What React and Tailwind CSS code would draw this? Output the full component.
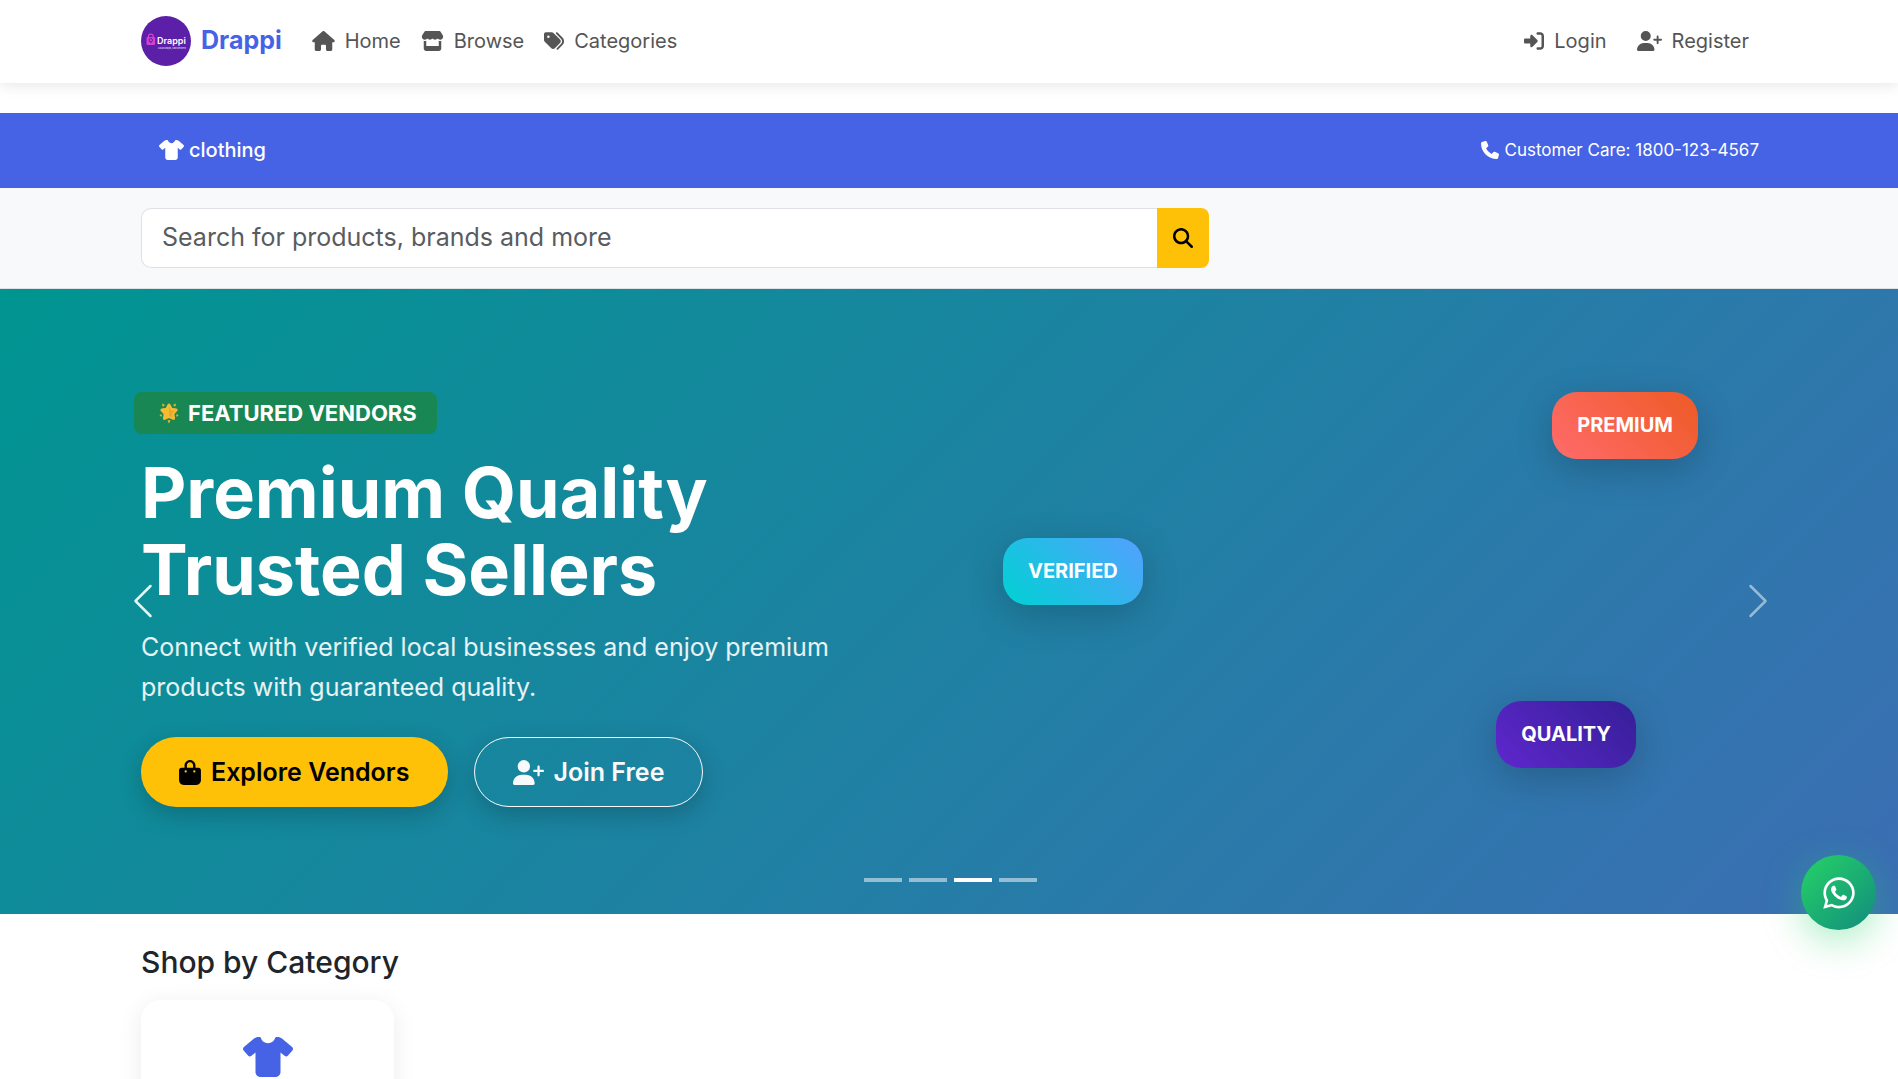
import React from "react";
import {
  FaHouse,
  FaStore,
  FaTags,
  FaRightToBracket,
  FaUserPlus,
  FaShirt,
  FaPhone,
  FaMagnifyingGlass,
  FaBagShopping,
  FaWhatsapp,
} from "react-icons/fa6";

const container = "mx-auto w-full max-w-[1650px] pl-[17px] pr-[15px]";

function Logo() {
  return (
    <svg viewBox="0 0 50 50" className="size-[50px]" role="img" aria-label="Drappi logo">
      <circle cx="25" cy="25" r="25" fill="#5b1fa8" />
      <path d="M7.400 21.500v-.9a2.400 2.400 0 0 1 4.800 0v.9" fill="none" stroke="#d63fd0" strokeWidth="1.200" />
      <rect x="5.500" y="21" width="8.600" height="8" rx="1.200" fill="#d63fd0" />
      <circle cx="9.800" cy="24.200" r="1.700" fill="none" stroke="#5b1fa8" strokeWidth="1" />
      <path d="M8.700 25.600l1.100 1.800 1.100-1.800z" fill="#5b1fa8" />
      <text x="16" y="27.500" fontFamily="Inter, sans-serif" fontWeight="600" fontSize="9" fill="#fff">
        Drappi
      </text>
      <text x="17" y="32.500" fontFamily="Inter, sans-serif" fontSize="2.200" fill="#d8c4f0">
        Local Shops, Fast Delivery
      </text>
    </svg>
  );
}

function GlowingStar() {
  return (
    <svg viewBox="0 0 24 24" className="size-[22px]" aria-hidden="true">
      <path
        d="M12 3.200l2.500 4.600 5.300.9-3.600 3.900.8 5.300-5-2.200-5 2.200.8-5.300-3.600-3.900 5.300-.9z"
        fill="#f5bb33"
        stroke="#f5bb33"
        strokeWidth="3.200"
        strokeLinejoin="round"
      />
      <path d="M12 5l1.900 4 4.300.7-3 3 .6 4.300-3.800-1.900z" fill="#eaa92c" />
      <g fill="#f5bb33">
        <path d="M4.500 1.600l3.200 1.700-2.600 1.900zM19.500 1.600l-3.200 1.700 2.600 1.900z" />
        <path d="M1.500 14.200l2.600-.8-.4 3zM22.500 14.200l-2.600-.8.4 3z" />
        <path d="M12 23.400l-1.600-3.400h3.200z" />
      </g>
    </svg>
  );
}

function NavItem({ icon: Icon, iconWidth, children }) {
  return (
    <a href="#" className="flex items-center gap-2.5 px-2.5 py-2 text-[#555]">
      <Icon className={`h-5 ${iconWidth}`} />
      {children}
    </a>
  );
}

function Chevron({ d }) {
  return (
    <svg viewBox="0 0 16 16" className="size-10" fill="currentColor" aria-hidden="true">
      <path fillRule="evenodd" d={d} />
    </svg>
  );
}

const chip =
  "absolute rounded-[25px] px-[25px] py-[18px] text-xl leading-[31px] font-bold text-white shadow-[0_10px_38px_rgba(0,0,0,0.2)]";

export default function App() {
  return (
    <div className="h-screen overflow-hidden bg-white font-['Inter',sans-serif] text-xl text-[#212529]">
      <header className="relative bg-white shadow-[0_2px_14px_rgba(0,0,0,0.1)]">
        <nav className={`${container} flex h-[83px] items-center pb-0.5`}>
          <a href="#" className="mr-5 flex items-center gap-2.5 text-[25px] font-bold text-[#4663e6]">
            <Logo />
            Drappi
          </a>
          <NavItem icon={FaHouse} iconWidth="w-[23px]">Home</NavItem>
          <NavItem icon={FaStore} iconWidth="w-[23px]">Browse</NavItem>
          <NavItem icon={FaTags} iconWidth="w-5">Categories</NavItem>
          <div className="ml-auto flex gap-2.5">
            <NavItem icon={FaRightToBracket} iconWidth="w-5">Login</NavItem>
            <NavItem icon={FaUserPlus} iconWidth="w-[25px]">Register</NavItem>
          </div>
        </nav>
      </header>

      <div className="mt-[30px] bg-[#4663e6] text-white">
        <div className={`${container} flex h-[75px] items-center justify-between`}>
          <a href="#" className="ml-[18px] flex items-center gap-[5px] pb-0.5 font-medium">
            <FaShirt className="h-5 w-[25px]" />
            clothing
          </a>
          <span className="flex items-center gap-1.5 text-[17px]">
            <FaPhone className="size-[18px]" />
            Customer Care: 1800-123-4567
          </span>
        </div>
      </div>

      <section className="border-b border-[#dee2e6] bg-[#f8f9fb] py-5">
        <div className={container}>
          <form className="flex w-[66%] max-w-[1069px]" onSubmit={(e) => e.preventDefault()}>
            <input
              type="text"
              aria-label="Search for products"
              placeholder="Search for products, brands and more"
              className="h-[60px] min-w-0 flex-1 rounded-l-[10px] border border-r-0 border-[#dee2e6] bg-white px-5 pb-0.5 text-[25px] placeholder:text-[#595c5f]"
            />
            <button
              type="submit"
              aria-label="Search"
              className="flex w-[52px] items-center justify-center rounded-r-[8px] bg-[#ffc107] text-black"
            >
              <FaMagnifyingGlass className="size-5" />
            </button>
          </form>
        </div>
      </section>

      <section className="relative h-[625px] overflow-hidden bg-linear-135/srgb from-[#009591] to-[#3c6eb4]">
        <div className={`${container} relative flex h-full flex-col items-start pt-[103px] text-white`}>
          <span className="-ml-[7px] flex h-[42px] items-center gap-2 rounded-lg bg-[#198754] pr-5 pl-6 text-[22px] font-bold">
            <GlowingStar />
            FEATURED VENDORS
          </span>
          <h1 className="mt-5 text-[70px] leading-[77px] font-bold">
            Premium Quality
            <br />
            Trusted Sellers
          </h1>
          <p className="mt-[19px] max-w-[740px] text-[25px] leading-10 text-white/90">
            Connect with verified local businesses and enjoy premium products with guaranteed quality.
          </p>
          <div className="mt-[30px] flex gap-[26px]">
            <button
              type="button"
              className="flex h-[70px] items-center gap-2.5 rounded-full bg-[#ffc107] px-[38px] text-[25px] font-semibold text-black shadow-[0_8px_25px_rgba(0,0,0,0.2)]"
            >
              <FaBagShopping className="h-[25px] w-[22px]" />
              Explore Vendors
            </button>
            <button
              type="button"
              className="flex h-[70px] items-center gap-2.5 rounded-full border border-[#f8f9fa] px-[38px] text-[25px] font-semibold text-[#f8f9fa] shadow-[0_8px_25px_rgba(0,0,0,0.2)]"
            >
              <FaUserPlus className="h-[25px] w-[31px]" />
              Join Free
            </button>
          </div>
          <span className={`${chip} top-[103px] right-[76px] bg-linear-45/srgb from-[#ff6b6b] to-[#ee5a24]`}>PREMIUM</span>
          <span className={`${chip} top-[249px] left-[879px] bg-linear-45/srgb from-[#00d2d3] to-[#54a0ff]`}>VERIFIED</span>
          <span className={`${chip} top-[412px] right-[138px] bg-linear-45/srgb from-[#5f27cd] to-[#341f97]`}>QUALITY</span>
        </div>

        <button
          type="button"
          aria-label="Previous"
          className="absolute inset-y-0 left-0 flex w-[15%] items-center justify-center pb-0.5 pl-0.5 text-white/90"
        >
          <Chevron d="M11.354 1.646a.5.5 0 0 1 0 .708L5.707 8l5.647 5.646a.5.5 0 0 1-.708.708l-6-6a.5.5 0 0 1 0-.708l6-6a.5.5 0 0 1 .708 0z" />
        </button>
        <button
          type="button"
          aria-label="Next"
          className="absolute inset-y-0 right-0 flex w-[15%] items-center justify-center pb-0.5 pl-1 text-white/50"
        >
          <Chevron d="M4.646 1.646a.5.5 0 0 1 .708 0l6 6a.5.5 0 0 1 0 .708l-6 6a.5.5 0 0 1-.708-.708L10.293 8 4.646 2.354a.5.5 0 0 1 0-.708z" />
        </button>
        <div className="absolute inset-x-0 bottom-8 flex justify-center gap-[7px] pl-0.5">
          <button type="button" aria-label="Slide 1" className="h-1 w-[38px] bg-white/50" />
          <button type="button" aria-label="Slide 2" className="h-1 w-[38px] bg-white/50" />
          <button type="button" aria-label="Slide 3" className="h-1 w-[38px] bg-white" />
          <button type="button" aria-label="Slide 4" className="h-1 w-[38px] bg-white/50" />
        </div>
      </section>

      <section className={`${container} pt-7`}>
        <h2 className="text-3xl leading-10 font-medium">Shop by Category</h2>
        <a
          href="#"
          aria-label="clothing"
          className="mt-[18px] flex h-[200px] w-[253px] flex-col items-center rounded-[20px] bg-white pt-[37px] text-[#4663e6] shadow-[0_5px_25px_rgba(0,0,0,0.08)]"
        >
          <FaShirt className="h-10 w-[50px]" />
        </a>
      </section>

      <a
        href="#"
        aria-label="Chat on WhatsApp"
        className="fixed right-[22px] bottom-[149px] flex size-[75px] items-center justify-center rounded-full bg-linear-135/srgb from-[#25d366] to-[#128c7e] text-white shadow-[0_10px_38px_rgba(37,211,102,0.4)]"
      >
        <FaWhatsapp className="size-9" />
      </a>
    </div>
  );
}
